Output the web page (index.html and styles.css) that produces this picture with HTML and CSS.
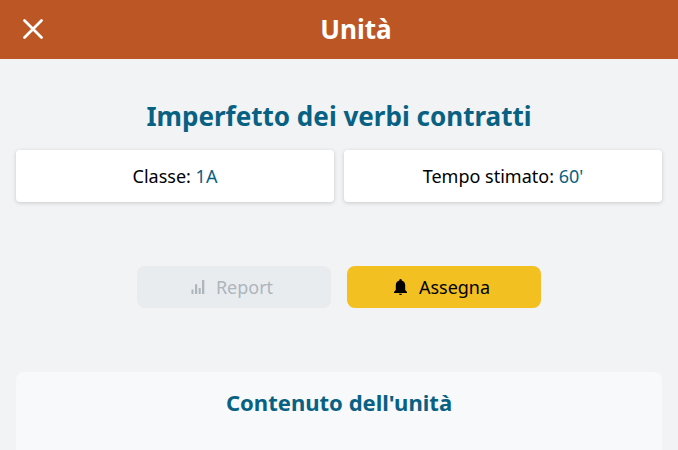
FILE: index.html
```html
<!DOCTYPE html>
<html lang="it">
<head>
<meta charset="utf-8">
<title>Unità</title>
<link rel="stylesheet" href="styles.css">
</head>
<body>
<header class="topbar">
  <button class="close" aria-label="Chiudi"><svg width="20" height="20" viewBox="0 0 20 20"><path d="M1.500 1.500 18.500 18.500M18.500 1.500 1.500 18.500"/></svg></button>
  <h1>Unità</h1>
</header>
<main>
  <h2>Imperfetto dei verbi contratti</h2>
  <div class="facts">
    <div class="fact">Classe: <span>1A</span></div>
    <div class="fact">Tempo stimato: <span>60'</span></div>
  </div>
  <div class="actions">
    <button class="btn report"><svg width="16" height="16" viewBox="0 0 16 16"><path d="M1.500 10.500h2V15h-2zM5 5.300h2.200V15H5zM8.700 9h2v6h-2zM12 1h2.300v14H12z"/></svg>Report</button>
    <button class="btn assign"><svg width="16" height="18" viewBox="0 0 16 18"><path d="M7.500 1a1.200 1.200 0 0 1 1.200 1.200v.4C11 3.200 12.200 5 12.200 7.500V12l1.800 2v1H1v-1l1.800-2V7.500C2.800 5 4 3.200 6.300 2.600v-.4A1.200 1.200 0 0 1 7.500 1zM5.900 15.700h3.200a1.600 1.300 0 0 1-3.200 0z"/></svg>Assegna</button>
  </div>
  <section class="content"><h3>Contenuto dell'unità</h3></section>
</main>
</body>
</html>
```
FILE: styles.css
```css
* { box-sizing: border-box; }
body { margin: 0; height: 450px; background: #f1f3f5; color: #000; font: 18px/27px "Noto Sans", sans-serif; }
h1, h2, h3 { margin: 0; font-weight: 700; text-align: center; }
button { border: 0; font: inherit; padding: 0; }
.topbar { height: 59px; background: #bc5725; color: #fff; display: grid; grid-template-columns: 66px 1fr 32px; align-items: center; }
.topbar h1 { font-size: 26.1px; line-height: 39px; }
.close { background: none; display: flex; justify-content: center; padding-bottom: 1px; }
.close svg { fill: none; stroke: #fff; stroke-width: 2.700; stroke-linecap: round; }
main { padding: 38px 16px 0; }
h2 { color: #086182; font-size: 26.05px; line-height: 39px; }
.facts { display: grid; grid-template-columns: 1fr 1fr; gap: 10px; margin-top: 14px; }
.fact { height: 52px; background: #fff; border-radius: 4px; box-shadow: 0 1px 4px rgba(0,0,0,.17); display: flex; align-items: center; justify-content: center; white-space: pre; }
.fact span { color: #086182; }
.actions { display: flex; justify-content: center; gap: 16px; margin-top: 64px; }
.btn { width: 194px; height: 42px; border-radius: 8px; display: flex; align-items: center; justify-content: center; gap: 10px; padding-right: 5px; }
.btn svg { fill: currentColor; }
.report { background: #e8ecef; color: #adb5bd; }
.assign { background: #f3c022; color: #000; }
.content { margin-top: 64px; height: 78px; border-radius: 8px 8px 0 0; background: #f8f9fb; padding-top: 14px; }
h3 { color: #086182; font-size: 22.05px; line-height: 33px; }
```
